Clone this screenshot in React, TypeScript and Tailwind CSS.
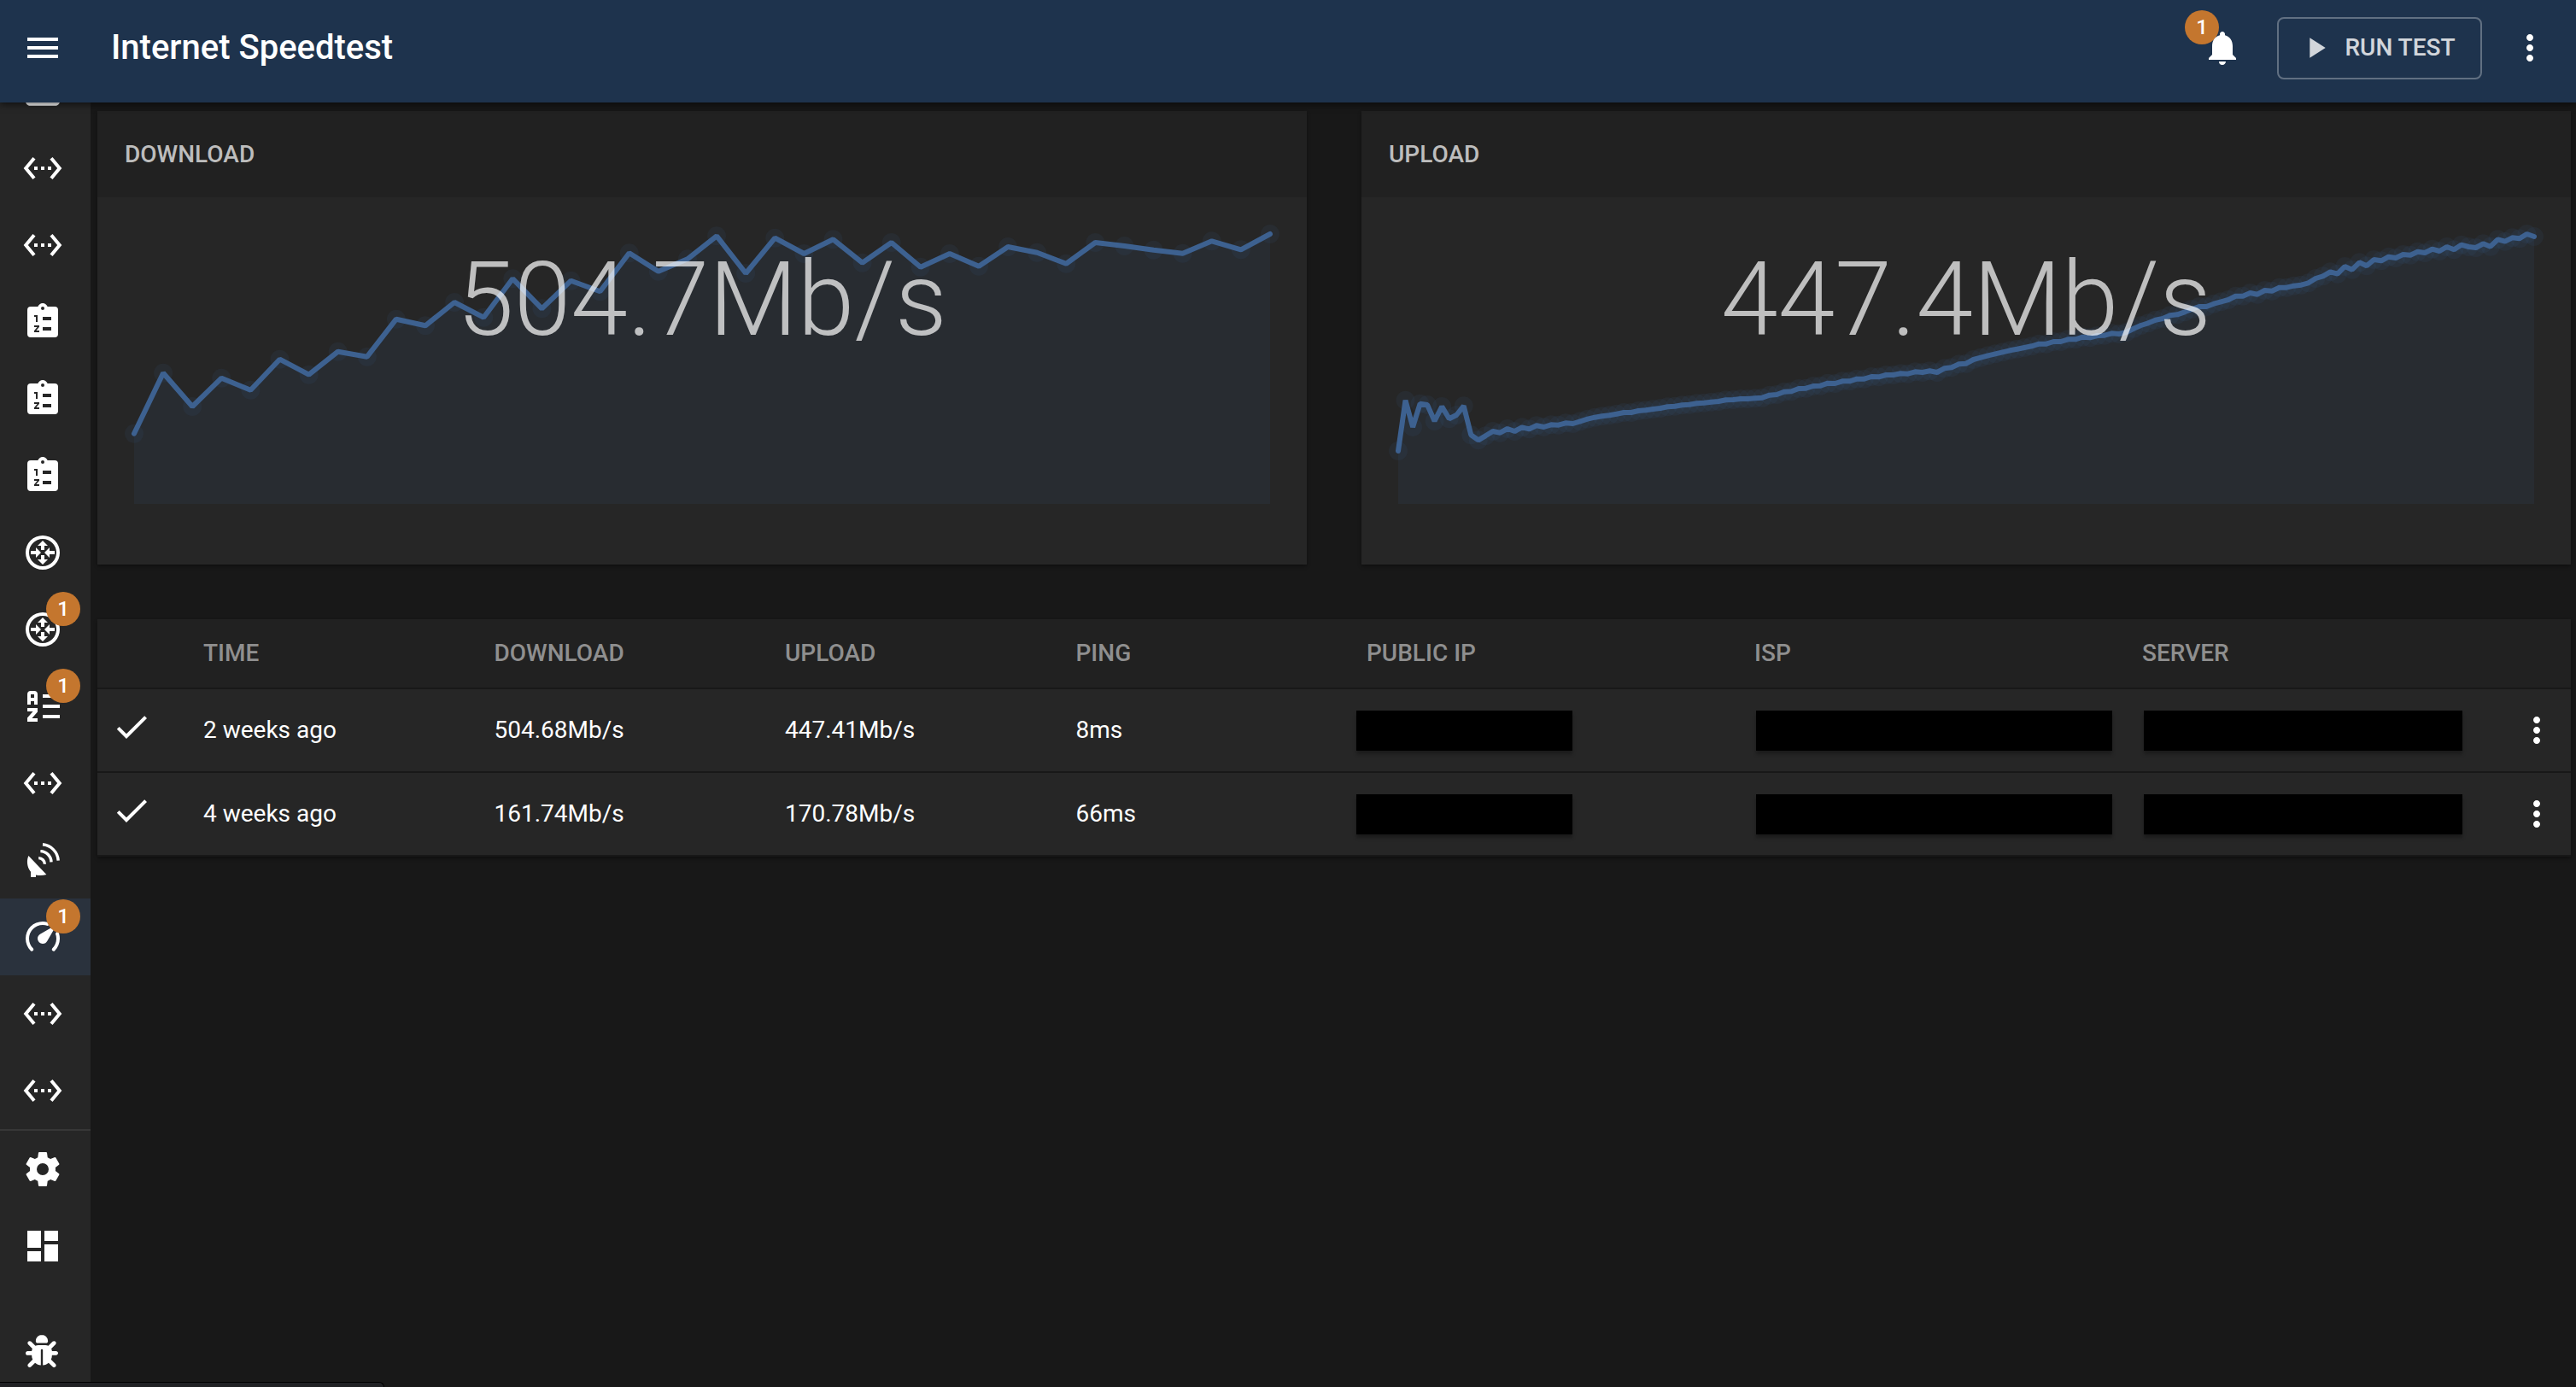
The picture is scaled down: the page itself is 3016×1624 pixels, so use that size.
import type { ReactNode } from "react";
import {
  MdCheck,
  MdDashboard,
  MdMenu,
  MdMoreVert,
  MdNotifications,
  MdPlayArrow,
  MdSettingsEthernet,
} from "react-icons/md";
import { FaBug } from "react-icons/fa6";

function Glyph({ children }: { children: ReactNode }) {
  return (
    <svg viewBox="0 0 24 24" className="size-12" fill="currentColor" aria-hidden="true">
      {children}
    </svg>
  );
}

const ethernet = <MdSettingsEthernet className="size-12" />;

const monitor = (
  <Glyph>
    <path d="M4 4h16a2 2 0 0 1 2 2v12c0 1.1-.9 2-2 2.4H4c-1.1-.4-2-1.300-2-2.400V6a2 2 0 0 1 2-2z" />
  </Glyph>
);

const clipboard = (
  <Glyph>
    <path
      fillRule="evenodd"
      d="M19 3h-4.180C14.400 1.840 13.300 1 12 1s-2.400.84-2.820 2H5a2 2 0 0 0-2 2v14a2 2 0 0 0 2 2h14a2 2 0 0 0 2-2V5a2 2 0 0 0-2-2zM12 3a1 1 0 1 1 0 2 1 1 0 0 1 0-2zM7 8h2v4H8V9H7zM12 9h5v2h-5zM7 14h3v.9L8.200 17H10v1H7v-.9L8.800 15H7zM12 15h5v2h-5z"
    />
  </Glyph>
);

const router = (
  <Glyph>
    <path
      fillRule="evenodd"
      d="M12 2a10 10 0 1 0 0 20 10 10 0 0 0 0-20zm0 2a8 8 0 1 1 0 16 8 8 0 0 1 0-16z"
    />
    <path d="M12 5l3 3h-2v2.500h-2V8H9zM12 19l-3-3h2v-2.500h2V16h2zM5 11h3V9l3 3-3 3v-2H5zM19 13h-3v2l-3-3 3-3v2h3z" />
  </Glyph>
);

const sortAZ = (
  <Glyph>
    <path d="M5 3a2 2 0 0 0-2 2v6h2V9h2v2h2V5a2 2 0 0 0-2-2zM5 5h2v2H5z" fillRule="evenodd" />
    <path d="M3 13h6v2.300L5.700 19H9v2H3v-2.300L6.300 15H3zM12 5h10v2H12zM12 11h10v2H12zM12 17h10v2H12z" />
  </Glyph>
);

const satellite = (
  <Glyph>
    <path d="M3.700 9.500L14.200 20.500C12 21.200 10 21.200 8 20.700V22H5v-3.100C3 16.500 2.300 12.800 3.700 9.500z" />
    <g fill="none" stroke="currentColor" strokeWidth="1.700">
      <path d="M12 2.900A10 10 0 0 1 21.100 12.300" />
      <path d="M10.700 6.800A6.500 6.500 0 0 1 17 13.200" />
      <path d="M9.600 10.800A3.600 3.600 0 0 1 13.200 14.400" />
    </g>
  </Glyph>
);

const speedometer = (
  <Glyph>
    <path d="M12,16A3,3 0 0,1 9,13C9,11.88 9.61,10.9 10.5,10.39L20.21,4.77L14.68,14.35C14.18,15.33 13.17,16 12,16M12,3C13.81,3 15.5,3.5 16.97,4.32L14.87,5.53C14,5.19 13,5 12,5A8,8 0 0,0 4,13C4,15.21 4.89,17.21 6.34,18.65H6.35C6.74,19.04 6.74,19.67 6.35,20.06C5.96,20.45 5.32,20.45 4.93,20.07V20.07C3.12,18.26 2,15.76 2,13A10,10 0 0,1 12,3M22,13C22,15.76 20.88,18.26 19.07,20.07V20.07C18.68,20.45 18.05,20.45 17.66,20.06C17.27,19.67 17.27,19.04 17.66,18.65V18.65C19.11,17.2 20,15.21 20,13C20,12 19.81,11 19.46,10.1L20.67,8C21.5,9.5 22,11.18 22,13Z" />
  </Glyph>
);

const cog = (
  <Glyph>
    <path d="M12,15.5A3.5,3.5 0 0,1 8.5,12A3.5,3.5 0 0,1 12,8.5A3.5,3.5 0 0,1 15.5,12A3.5,3.5 0 0,1 12,15.5M19.43,12.97C19.47,12.65 19.5,12.33 19.5,12C19.5,11.67 19.47,11.34 19.43,11L21.54,9.37C21.73,9.22 21.78,8.95 21.66,8.73L19.66,5.27C19.54,5.05 19.27,4.96 19.05,5.05L16.56,6.05C16.04,5.66 15.5,5.32 14.87,5.07L14.5,2.42C14.46,2.18 14.25,2 14,2H10C9.75,2 9.54,2.18 9.5,2.42L9.13,5.07C8.5,5.32 7.96,5.66 7.44,6.05L4.95,5.05C4.73,4.96 4.46,5.05 4.34,5.27L2.34,8.73C2.21,8.95 2.27,9.22 2.46,9.37L4.57,11C4.53,11.34 4.5,11.67 4.5,12C4.5,12.33 4.53,12.65 4.57,12.97L2.46,14.63C2.27,14.78 2.21,15.05 2.34,15.27L4.34,18.73C4.46,18.95 4.73,19.03 4.95,18.95L7.44,17.94C7.96,18.34 8.5,18.68 9.13,18.93L9.5,21.58C9.54,21.82 9.75,22 10,22H14C14.25,22 14.46,21.82 14.5,21.58L14.87,18.93C15.5,18.67 16.04,18.34 16.56,17.94L19.05,18.95C19.27,19.03 19.54,18.95 19.66,18.73L21.66,15.27C21.78,15.05 21.73,14.78 21.54,14.63L19.43,12.97Z" />
  </Glyph>
);

type NavItem = { label: string; icon: ReactNode; badge?: number; active?: boolean };

const devices: NavItem[] = [
  { label: "Monitor", icon: monitor },
  { label: "Network 1", icon: ethernet },
  { label: "Network 2", icon: ethernet },
  { label: "Tasks 1", icon: clipboard },
  { label: "Tasks 2", icon: clipboard },
  { label: "Tasks 3", icon: clipboard },
  { label: "Router 1", icon: router },
  { label: "Router 2", icon: router, badge: 1 },
  { label: "Names", icon: sortAZ, badge: 1 },
  { label: "Network 3", icon: ethernet },
  { label: "Satellite", icon: satellite },
  { label: "Internet Speedtest", icon: speedometer, badge: 1, active: true },
  { label: "Network 4", icon: ethernet },
  { label: "Network 5", icon: ethernet },
];

const system: NavItem[] = [
  { label: "Settings", icon: cog },
  { label: "Dashboard", icon: <MdDashboard className="size-12" /> },
];

function Badge({ count }: { count: number }) {
  return (
    <span className="flex size-10 items-center justify-center rounded-full bg-[#c4762e] text-2xl font-medium text-white">
      {count}
    </span>
  );
}

function NavLink({ item }: { item: NavItem }) {
  return (
    <li>
      <a
        href="#"
        aria-label={item.label}
        aria-current={item.active ? "page" : undefined}
        className={`flex h-[90px] items-center pl-[26px] ${item.active ? "bg-[#2a323d]" : ""}`}
      >
        <span className="relative">
          {item.icon}
          {item.badge !== undefined && (
            <span className="absolute -top-5 -right-5">
              <Badge count={item.badge} />
            </span>
          )}
        </span>
      </a>
    </li>
  );
}

const VIEW_W = 1416;
const VIEW_H = 430;
const LEFT = 43;
const RIGHT = 1373;
const BASE = 359;

/* Sample heights are stored in thirds of a unit, measured from a line 31 units above the plot. */
const downloadSamples = [
  923, 710, 828, 728, 770, 662, 716, 635, 653, 521, 544, 462, 515, 379, 484, 386, 424, 289, 353, 310,
  229, 360, 236, 291, 241, 323, 252, 338, 291, 335, 267, 287, 326, 252, 264, 278, 290, 247, 277, 222,
];

const uploadSamples = [
  984, 806, 900, 818, 822, 879, 828, 871, 858, 826, 928, 946, 931, 915, 920, 906, 915, 901, 907, 895,
  900, 892, 893, 886, 888, 880, 872, 866, 862, 859, 854, 849, 849, 843, 841, 837, 834, 829, 827, 823,
  821, 817, 815, 812, 810, 805, 804, 801, 801, 799, 797, 788, 786, 776, 775, 765, 764, 756, 755, 746,
  747, 739, 739, 731, 731, 723, 724, 717, 717, 712, 713, 706, 708, 703, 708, 694, 691, 679, 677, 663,
  656, 649, 643, 637, 631, 626, 621, 616, 608, 608, 600, 600, 592, 592, 584, 586, 579, 578, 571, 573,
  567, 554, 543, 535, 524, 519, 508, 505, 496, 486, 477, 477, 467, 460, 453, 440, 440, 429, 434, 420,
  422, 410, 410, 404, 401, 394, 378, 370, 355, 362, 336, 347, 322, 334, 312, 316, 302, 306, 294, 296,
  284, 288, 275, 282, 267, 277, 260, 267, 270, 256, 266, 241, 248, 235, 238, 222, 231,
];

function SpeedCard({ title, value, samples }: { title: string; value: string; samples: number[] }) {
  const points = samples.map((s, i) => ({
    x: LEFT + ((RIGHT - LEFT) * i) / (samples.length - 1),
    y: s / 3 - 31,
  }));
  const line = points.map((p) => `${p.x.toFixed(1)},${p.y.toFixed(1)}`).join(" ");
  return (
    <section className="flex-1 bg-[#262626] shadow-[0_2px_4px_rgba(0,0,0,0.4)]">
      <h2 className="flex h-[101px] items-center bg-[#212121] px-8 text-[28px] font-medium text-[#bdbdbd]">
        {title}
      </h2>
      <div className="relative">
        <svg
          viewBox={`0 0 ${VIEW_W} ${VIEW_H}`}
          className="block h-auto w-full"
          role="img"
          aria-label={`${title} speed over time`}
        >
          <polygon points={`${LEFT},${BASE} ${line} ${RIGHT},${BASE}`} fill="#3d78ae" fillOpacity="0.080" />
          {points.map((p, i) => (
            <circle key={i} cx={p.x} cy={p.y} r="11" fill="#3d78b8" fillOpacity="0.080" />
          ))}
          <polyline
            points={line}
            fill="none"
            stroke="#3d6190"
            strokeWidth="6"
            strokeLinecap="round"
            strokeLinejoin="bevel"
          />
        </svg>
        <p className="absolute inset-x-0 top-[50px] text-center text-[120px] leading-[140px] font-light text-white/70">
          {value}
        </p>
      </div>
    </section>
  );
}

const rowGrid = "grid grid-cols-[124px_3fr_3fr_3fr_3fr_4fr_4fr_4fr_48px] items-center";

const results = [
  { time: "2 weeks ago", download: "504.68Mb/s", upload: "447.41Mb/s", ping: "8ms" },
  { time: "4 weeks ago", download: "161.74Mb/s", upload: "170.78Mb/s", ping: "66ms" },
];

function ResultsTable() {
  return (
    <table className="block bg-[#262626] text-[28px] shadow-[0_2px_4px_rgba(0,0,0,0.4)]">
      <thead className="block">
        <tr className={`${rowGrid} h-[82px] border-b-2 border-[#181818] bg-[#212121] text-left text-[#8f8f8f]`}>
          <td />
          <th className="font-medium">TIME</th>
          <th className="font-medium">DOWNLOAD</th>
          <th className="font-medium">UPLOAD</th>
          <th className="font-medium">PING</th>
          <th className="font-medium">PUBLIC IP</th>
          <th className="font-medium">ISP</th>
          <th className="font-medium">SERVER</th>
          <td />
        </tr>
      </thead>
      <tbody className="block">
        {results.map((r) => (
          <tr key={r.time} className={`${rowGrid} h-[98px] border-b-2 border-[#181818] text-white`}>
            <td className="pb-2 pl-4">
              <MdCheck className="size-12" role="img" aria-label="Succeeded" />
            </td>
            <td>{r.time}</td>
            <td>{r.download}</td>
            <td>{r.upload}</td>
            <td>{r.ping}</td>
            <td>
              <div className="-ml-3 h-[47px] w-[253px] bg-black shadow-[0_4px_4px_rgba(0,0,0,0.3)]" />
            </td>
            <td className="pl-0.5">
              <div className="h-[47px] w-[417px] bg-black shadow-[0_4px_4px_rgba(0,0,0,0.3)]" />
            </td>
            <td className="pl-0.5">
              <div className="h-[47px] w-[373px] bg-black shadow-[0_4px_4px_rgba(0,0,0,0.3)]" />
            </td>
            <td>
              <button type="button" aria-label={`Actions for ${r.time}`} className="-ml-4 block">
                <MdMoreVert className="size-12" />
              </button>
            </td>
          </tr>
        ))}
      </tbody>
    </table>
  );
}

export default function App() {
  return (
    <div className="relative flex min-h-screen flex-col bg-[#181818] font-[Roboto,sans-serif] text-white">
      <header className="z-10 flex h-[120px] items-center bg-[#1e334d] pr-[30px] pb-2 pl-[26px] shadow-[0_2px_8px_rgba(0,0,0,0.6)]">
        <button type="button" aria-label="Menu">
          <MdMenu className="size-12" />
        </button>
        <h1 className="ml-14 flex-1 text-[40px] font-medium">Internet Speedtest</h1>
        <button type="button" aria-label="1 notification" className="relative mr-10">
          <span className="absolute -top-5 -left-5">
            <Badge count={1} />
          </span>
          <MdNotifications className="relative size-12" />
        </button>
        <button
          type="button"
          className="mr-8 flex h-[73px] w-[240px] items-center justify-center gap-3.5 rounded-lg border-2 border-white/30 pr-1.5 text-[28px] font-medium text-white/80"
        >
          <MdPlayArrow className="size-10" />
          RUN TEST
        </button>
        <button type="button" aria-label="More options">
          <MdMoreVert className="size-12" />
        </button>
      </header>

      <div className="flex flex-1">
        <nav aria-label="Main" className="flex w-[106px] shrink-0 flex-col bg-[#262626]">
          <ul className="-mt-[58px]">
            {devices.map((d) => (
              <NavLink key={d.label} item={d} />
            ))}
          </ul>
          <ul className="border-t-2 border-[#373737]">
            {system.map((s) => (
              <NavLink key={s.label} item={s} />
            ))}
          </ul>
          <a href="#" aria-label="Report a bug" className="mt-auto mb-[23px] pl-[30px]">
            <FaBug className="size-[38px]" />
          </a>
        </nav>

        <main className="flex flex-1 flex-col gap-16 pt-[10px] pr-[6px] pl-2">
          <div className="flex gap-16">
            <SpeedCard title="DOWNLOAD" value="504.7Mb/s" samples={downloadSamples} />
            <SpeedCard title="UPLOAD" value="447.4Mb/s" samples={uploadSamples} />
          </div>
          <ResultsTable />
        </main>
      </div>

      <div className="absolute bottom-0 left-0 h-[6px] w-[450px] rounded-tr-md border-t border-r border-black bg-[#202124]" />
    </div>
  );
}
